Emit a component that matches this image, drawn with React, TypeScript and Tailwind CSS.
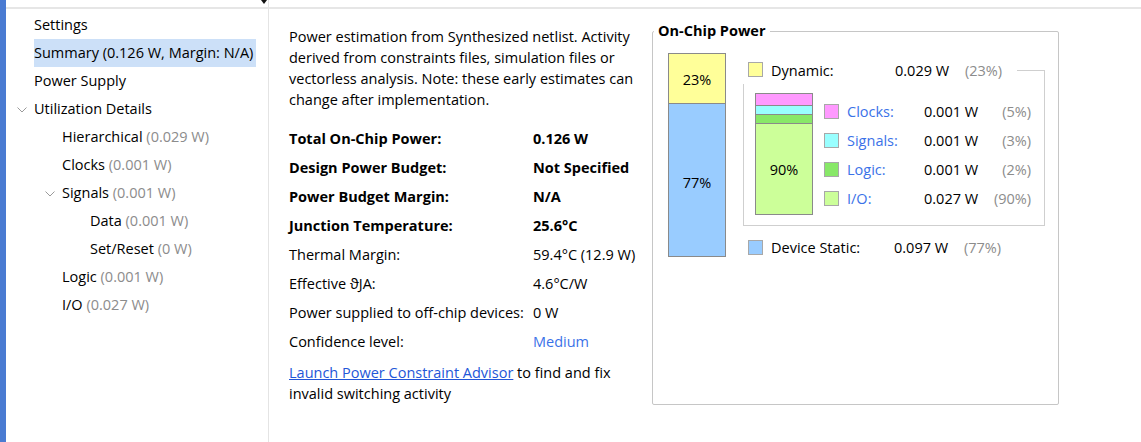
const font = "font-['Open_Sans',sans-serif]";

function Chevron() {
  return (
    <svg width="10" height="6" viewBox="0 0 10 6" className="text-[#9a9a9a]">
      <path d="M0.5 0.5 L5 5 L9.5 0.5" fill="none" stroke="currentColor" strokeWidth="1" />
    </svg>
  );
}

type TreeItem = { label: string; sub?: string; indent: number; open?: boolean; selected?: boolean };

const tree: TreeItem[] = [
  { label: "Settings", indent: 0 },
  { label: "Summary (0.126 W, Margin: N/A)", indent: 0, selected: true },
  { label: "Power Supply", indent: 0 },
  { label: "Utilization Details", indent: 0, open: true },
  { label: "Hierarchical", sub: "(0.029 W)", indent: 1 },
  { label: "Clocks", sub: "(0.001 W)", indent: 1 },
  { label: "Signals", sub: "(0.001 W)", indent: 1, open: true },
  { label: "Data", sub: "(0.001 W)", indent: 2 },
  { label: "Set/Reset", sub: "(0 W)", indent: 2 },
  { label: "Logic", sub: "(0.001 W)", indent: 1 },
  { label: "I/O", sub: "(0.027 W)", indent: 1 },
];

const indentPad = ["pl-[28px]", "pl-[56px]", "pl-[84px]"];

function Tree() {
  return (
    <div className="flex flex-col pt-[2px]">
      {tree.map((t) => (
        <div key={t.label} className={`relative flex h-[28px] items-center ${indentPad[t.indent]}`}>
          {t.open && (
            <span className="absolute top-[12px]" style={{ left: t.indent * 28 + 11 }}>
              <Chevron />
            </span>
          )}
          <span className={`whitespace-nowrap leading-[28px] pr-[3px] ${t.selected ? "bg-[#cce0f8]" : ""}`}>
            {t.label}
            {t.sub && <span className="text-[#8c8c8c]"> {t.sub}</span>}
          </span>
        </div>
      ))}
    </div>
  );
}

const summaryRows: { k: string; v: string; bold?: boolean; blue?: boolean }[] = [
  { k: "Total On-Chip Power:", v: "0.126 W", bold: true },
  { k: "Design Power Budget:", v: "Not Specified", bold: true },
  { k: "Power Budget Margin:", v: "N/A", bold: true },
  { k: "Junction Temperature:", v: "25.6°C", bold: true },
  { k: "Thermal Margin:", v: "59.4°C (12.9 W)" },
  { k: "Effective ϑJA:", v: "4.6°C/W" },
  { k: "Power supplied to off-chip devices:", v: "0 W" },
  { k: "Confidence level:", v: "Medium", blue: true },
];

function Swatch({ color }: { color: string }) {
  return <span className={`inline-block h-[15px] w-[15px] shrink-0 border border-[#a8a8a8] ${color}`} />;
}

const dynRows = [
  { name: "Clocks:", w: "0.001 W", p: "(5%)", color: "bg-[#ff99ff]" },
  { name: "Signals:", w: "0.001 W", p: "(3%)", color: "bg-[#99ffff]" },
  { name: "Logic:", w: "0.001 W", p: "(2%)", color: "bg-[#88e868]" },
  { name: "I/O:", w: "0.027 W", p: "(90%)", color: "bg-[#ccff99]" },
];

function OnChipPower() {
  return (
    <fieldset className="h-[383px] w-[407px] rounded-[2px] border border-[#c6c6c6]">
      <legend className="ml-[1px] px-[4px] text-[14.5px] font-bold leading-[18px]">On-Chip Power</legend>
      <div className="flex pl-[15px] pt-[13px]">
        {/* total bar */}
        <div className="flex h-[204px] w-[58px] shrink-0 flex-col border border-[#8a8a8a]">
          <div className="flex h-[50px] items-center justify-center border-b border-[#8a8a8a] bg-[#ffff99] pt-[3px]">23%</div>
          <div className="flex flex-1 items-center justify-center bg-[#99ccff] pt-[5px]">77%</div>
        </div>
        <div className="ml-[17px] mt-[9px] flex w-[302px] flex-col">
          {/* dynamic row */}
          <div className="flex h-[22px] items-start">
            <span className="ml-[5px] flex"><Swatch color="bg-[#ffff99]" /></span>
            <span className="ml-[8px] w-[124px] leading-[17px]">Dynamic:</span>
            <span className="w-[70px] leading-[17px]">0.029 W</span>
            <span className="w-[52px] leading-[17px] text-[#8c8c8c]">(23%)</span>
            <span className="mt-[8px] flex-1 self-stretch border-t border-r border-[#cfcfcf]" />
          </div>
          {/* dynamic breakdown */}
          <div className="flex h-[142px] border-b border-l border-r border-[#cfcfcf] pl-[11px] pt-[9px]">
            <div className="flex h-[122px] w-[58px] shrink-0 flex-col border border-[#8a8a8a]">
              <div className="h-[12px] border-b border-[#8a8a8a] bg-[#ff99ff]" />
              <div className="h-[9px] border-b border-[#8a8a8a] bg-[#99ffff]" />
              <div className="h-[9px] border-b border-[#8a8a8a] bg-[#88e868]" />
              <div className="flex flex-1 items-center justify-center bg-[#ccff99] pt-[2px]">90%</div>
            </div>
            <div className="ml-[11px] flex w-[207px] flex-col pt-[4px]">
              {dynRows.map((r) => (
                <div key={r.name} className="flex h-[29px] items-center">
                  <Swatch color={r.color} />
                  <span className="ml-[8px] w-[77px] text-[#3b72e8]">{r.name}</span>
                  <span className="w-[60px]">{r.w}</span>
                  <span className="flex-1 text-right text-[#8c8c8c]">{r.p}</span>
                </div>
              ))}
            </div>
          </div>
          {/* static row */}
          <div className="mt-[11px] flex items-center">
            <span className="ml-[5px] flex"><Swatch color="bg-[#99ccff]" /></span>
            <span className="ml-[8px] w-[123px]">Device Static:</span>
            <span className="w-[70px]">0.097 W</span>
            <span className="text-[#8c8c8c]">(77%)</span>
          </div>
        </div>
      </div>
    </fieldset>
  );
}

export default function App() {
  return (
    <div className={`flex h-[442px] w-[1141px] overflow-hidden bg-white text-[14.5px] text-black ${font}`}>
      <div className="w-[6px] shrink-0 bg-[#4a7bd2]" />
      {/* left tree pane */}
      <div className="flex w-[262px] shrink-0 flex-col">
        <div className="relative h-[7px]">
          <svg className="absolute right-[1px] top-0" width="6" height="4" viewBox="0 0 6 4">
            <path d="M0 0 L6 0 L3 4 Z" fill="#111" />
          </svg>
        </div>
        <div className="h-[2px] bg-[#e6e6e6]" />
        <Tree />
      </div>
      <div className="w-px shrink-0 bg-[#e4e4e4]" />
      {/* summary pane */}
      <div className="flex flex-1 flex-col">
        <div className="h-[7px]" />
        <div className="h-[2px] bg-[#e6e6e6]" />
        <div className="flex">
          <div className="w-[383px] shrink-0 pl-[20px] pt-[17px]">
            <p className="whitespace-nowrap leading-[21px]">
              Power estimation from Synthesized netlist. Activity
              <br />
              derived from constraints files, simulation files or
              <br />
              vectorless analysis. Note: these early estimates can
              <br />
              change after implementation.
            </p>
            <div className="mt-[14px] flex flex-col">
              {summaryRows.map((r) => (
                <div key={r.k} className={`flex h-[29px] items-center whitespace-nowrap ${r.bold ? "font-bold" : ""}`}>
                  <span className="w-[244px]">{r.k}</span>
                  <span className={r.blue ? "text-[#3b72e8]" : ""}>{r.v}</span>
                </div>
              ))}
            </div>
            <p className="mt-[6px] whitespace-nowrap leading-[21px]">
              <a href="#" className="text-[#2356d8] underline">Launch Power Constraint Advisor</a> to find and fix
              <br />
              invalid switching activity
            </p>
          </div>
          <div className="pt-[13px]">
            <OnChipPower />
          </div>
        </div>
      </div>
    </div>
  );
}
